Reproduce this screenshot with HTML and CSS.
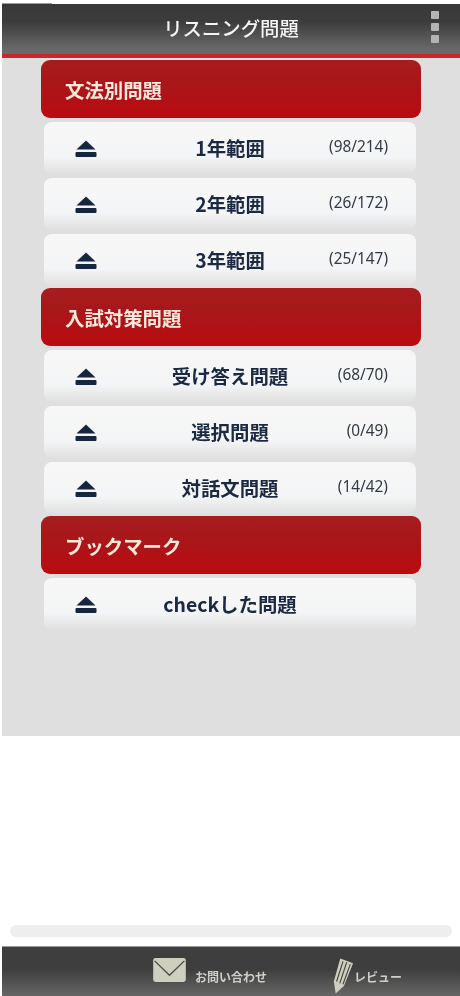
FILE: index.html
```html
<!DOCTYPE html>
<html lang="ja">
<head>
<meta charset="utf-8">
<title>リスニング問題</title>
<link rel="stylesheet" href="styles.css">
</head>
<body>
<svg class="defs" width="0" height="0" aria-hidden="true">
  <symbol id="eject" viewBox="0 0 22 18">
    <path d="M11 0.5 L20.5 9.5 H1.5 Z" fill="#16263f"/>
    <rect x="0.5" y="12" width="21" height="5" rx="1" fill="#16263f"/>
  </symbol>
</svg>
<div class="app">
  <div class="topline"><span class="topline-left"></span></div>
  <header class="header">
    <h1 class="title">リスニング問題</h1>
    <div class="kebab"><span></span><span></span><span></span></div>
  </header>
  <main class="content">
    <section class="section">
      <h2 class="section-head">文法別問題</h2>
      <a class="row"><svg class="eject"><use href="#eject"/></svg><span class="label">1年範囲</span><span class="count">(98/214)</span></a>
      <a class="row"><svg class="eject"><use href="#eject"/></svg><span class="label">2年範囲</span><span class="count">(26/172)</span></a>
      <a class="row"><svg class="eject"><use href="#eject"/></svg><span class="label">3年範囲</span><span class="count">(25/147)</span></a>
    </section>
    <section class="section">
      <h2 class="section-head">入試対策問題</h2>
      <a class="row"><svg class="eject"><use href="#eject"/></svg><span class="label">受け答え問題</span><span class="count">(68/70)</span></a>
      <a class="row"><svg class="eject"><use href="#eject"/></svg><span class="label">選択問題</span><span class="count">(0/49)</span></a>
      <a class="row"><svg class="eject"><use href="#eject"/></svg><span class="label">対話文問題</span><span class="count">(14/42)</span></a>
    </section>
    <section class="section">
      <h2 class="section-head">ブックマーク</h2>
      <a class="row"><svg class="eject"><use href="#eject"/></svg><span class="label">checkした問題</span><span class="count"></span></a>
    </section>
  </main>
  <div class="blank">
    <div class="scrollbar"></div>
  </div>
  <footer class="footer">
    <a class="foot-link mail">
      <svg class="mail-icon" viewBox="0 0 34 25">
        <rect width="34" height="25" rx="2.5" fill="#cfcfbd"/>
        <path d="M1.5 3 L17 18 L32.5 3" fill="none" stroke="#4a4a48" stroke-width="1.4"/>
      </svg>
      <span class="foot-text">お問い合わせ</span>
    </a>
    <a class="foot-link review">
      <svg class="pencil-icon" viewBox="0 0 24 38">
        <path d="M9 0 L23 5 L13 30 L4 38 L2 25 Z" fill="#cfcfbd"/>
        <path d="M12 3 L5 25 M16 4 L8.5 27 M20 6 L12 28" fill="none" stroke="#4a4a48" stroke-width="1.3"/>
      </svg>
      <span class="foot-text">レビュー</span>
    </a>
  </footer>
</div>
</body>
</html>
```
FILE: styles.css
```css
* { box-sizing: border-box; }
html, body { margin: 0; padding: 0; background: #fff; }
body { font-family: "Noto Sans CJK JP", "Noto Sans", sans-serif; }
.defs { position: absolute; }
.app {
  width: 460px;
  height: 996px;
  padding-left: 2px;
  display: flex;
  flex-direction: column;
  overflow: hidden;
  filter: blur(0.5px);
}
.topline { height: 4px; flex: none; display: flex; align-items: flex-end; }
.topline-left { width: 50px; height: 1px; background: #9a9a9a; }
.header {
  flex: none;
  height: 54px;
  display: flex;
  align-items: center;
  justify-content: center;
  position: relative;
  background: linear-gradient(#383838 0%, #3c3c3c 35%, #6a6a6a 92%, #6a6a6a 100%);
  border-bottom: 4px solid #c8282c;
}
.title {
  margin: 0 0 3px;
  font-size: 19.4px;
  font-weight: 500;
  color: #f4f4f4;
  line-height: 1;
}
.kebab {
  position: absolute;
  right: 21px;
  top: 7px;
  display: flex;
  flex-direction: column;
  gap: 4px;
}
.kebab span { width: 8px; height: 8px; background: #b4b4b4; border-radius: 1px; }
.content {
  flex: none;
  height: 678px;
  background: #dfdfdf;
  padding: 2px 39px 0;
  display: flex;
  flex-direction: column;
  gap: 2px;
}
.section { display: flex; flex-direction: column; gap: 4px; }
.section-head {
  margin: 0;
  height: 58px;
  display: flex;
  align-items: center;
  padding-left: 24px;
  border-radius: 9px;
  background: linear-gradient(#a61c1e 0%, #a8171a 40%, #bc0a10 100%);
  color: #fde8dc;
  font-size: 19.4px;
  font-weight: 700;
}
.row {
  position: relative;
  height: 52px;
  margin: 0 5px 0 3px;
  display: flex;
  align-items: center;
  justify-content: center;
  border-radius: 8px;
  background: linear-gradient(#f7f7f7 0%, #f4f5f6 66%, #e0e0e0 100%);
}
.eject {
  position: absolute;
  left: 31px;
  top: 18px;
  width: 22px;
  height: 18px;
}
.label {
  font-size: 19.4px;
  font-weight: 700;
  color: #1b2a42;
  line-height: 1;
}
.count {
  position: absolute;
  right: 28px;
  top: 15px;
  font-family: "Noto Sans", sans-serif;
  font-size: 15.4px;
  line-height: 20px;
  color: #333a46;
}
.blank {
  flex: 1;
  display: flex;
  flex-direction: column;
  justify-content: flex-end;
  padding: 0 8px 9px;
  background: #fff;
}
.scrollbar { height: 12px; border-radius: 6px; background: #eeeeee; }
.footer {
  flex: none;
  height: 50px;
  position: relative;
  background: linear-gradient(#3e3e3e 0%, #3e3e3e 45%, #666 100%);
  border-top: 1px solid #999;
  color: #cfcfc6;
}
.foot-link { position: absolute; top: 0; display: flex; align-items: flex-start; }
.mail { left: 151px; }
.review { left: 330px; }
.mail-icon { width: 33px; height: 24px; margin-top: 11px; }
.pencil-icon { width: 22px; height: 38px; margin-top: 10px; }
.foot-text { font-size: 12px; font-weight: 700; line-height: 14px; margin-top: 23px; }
.mail .foot-text { margin-left: 9px; }
```
